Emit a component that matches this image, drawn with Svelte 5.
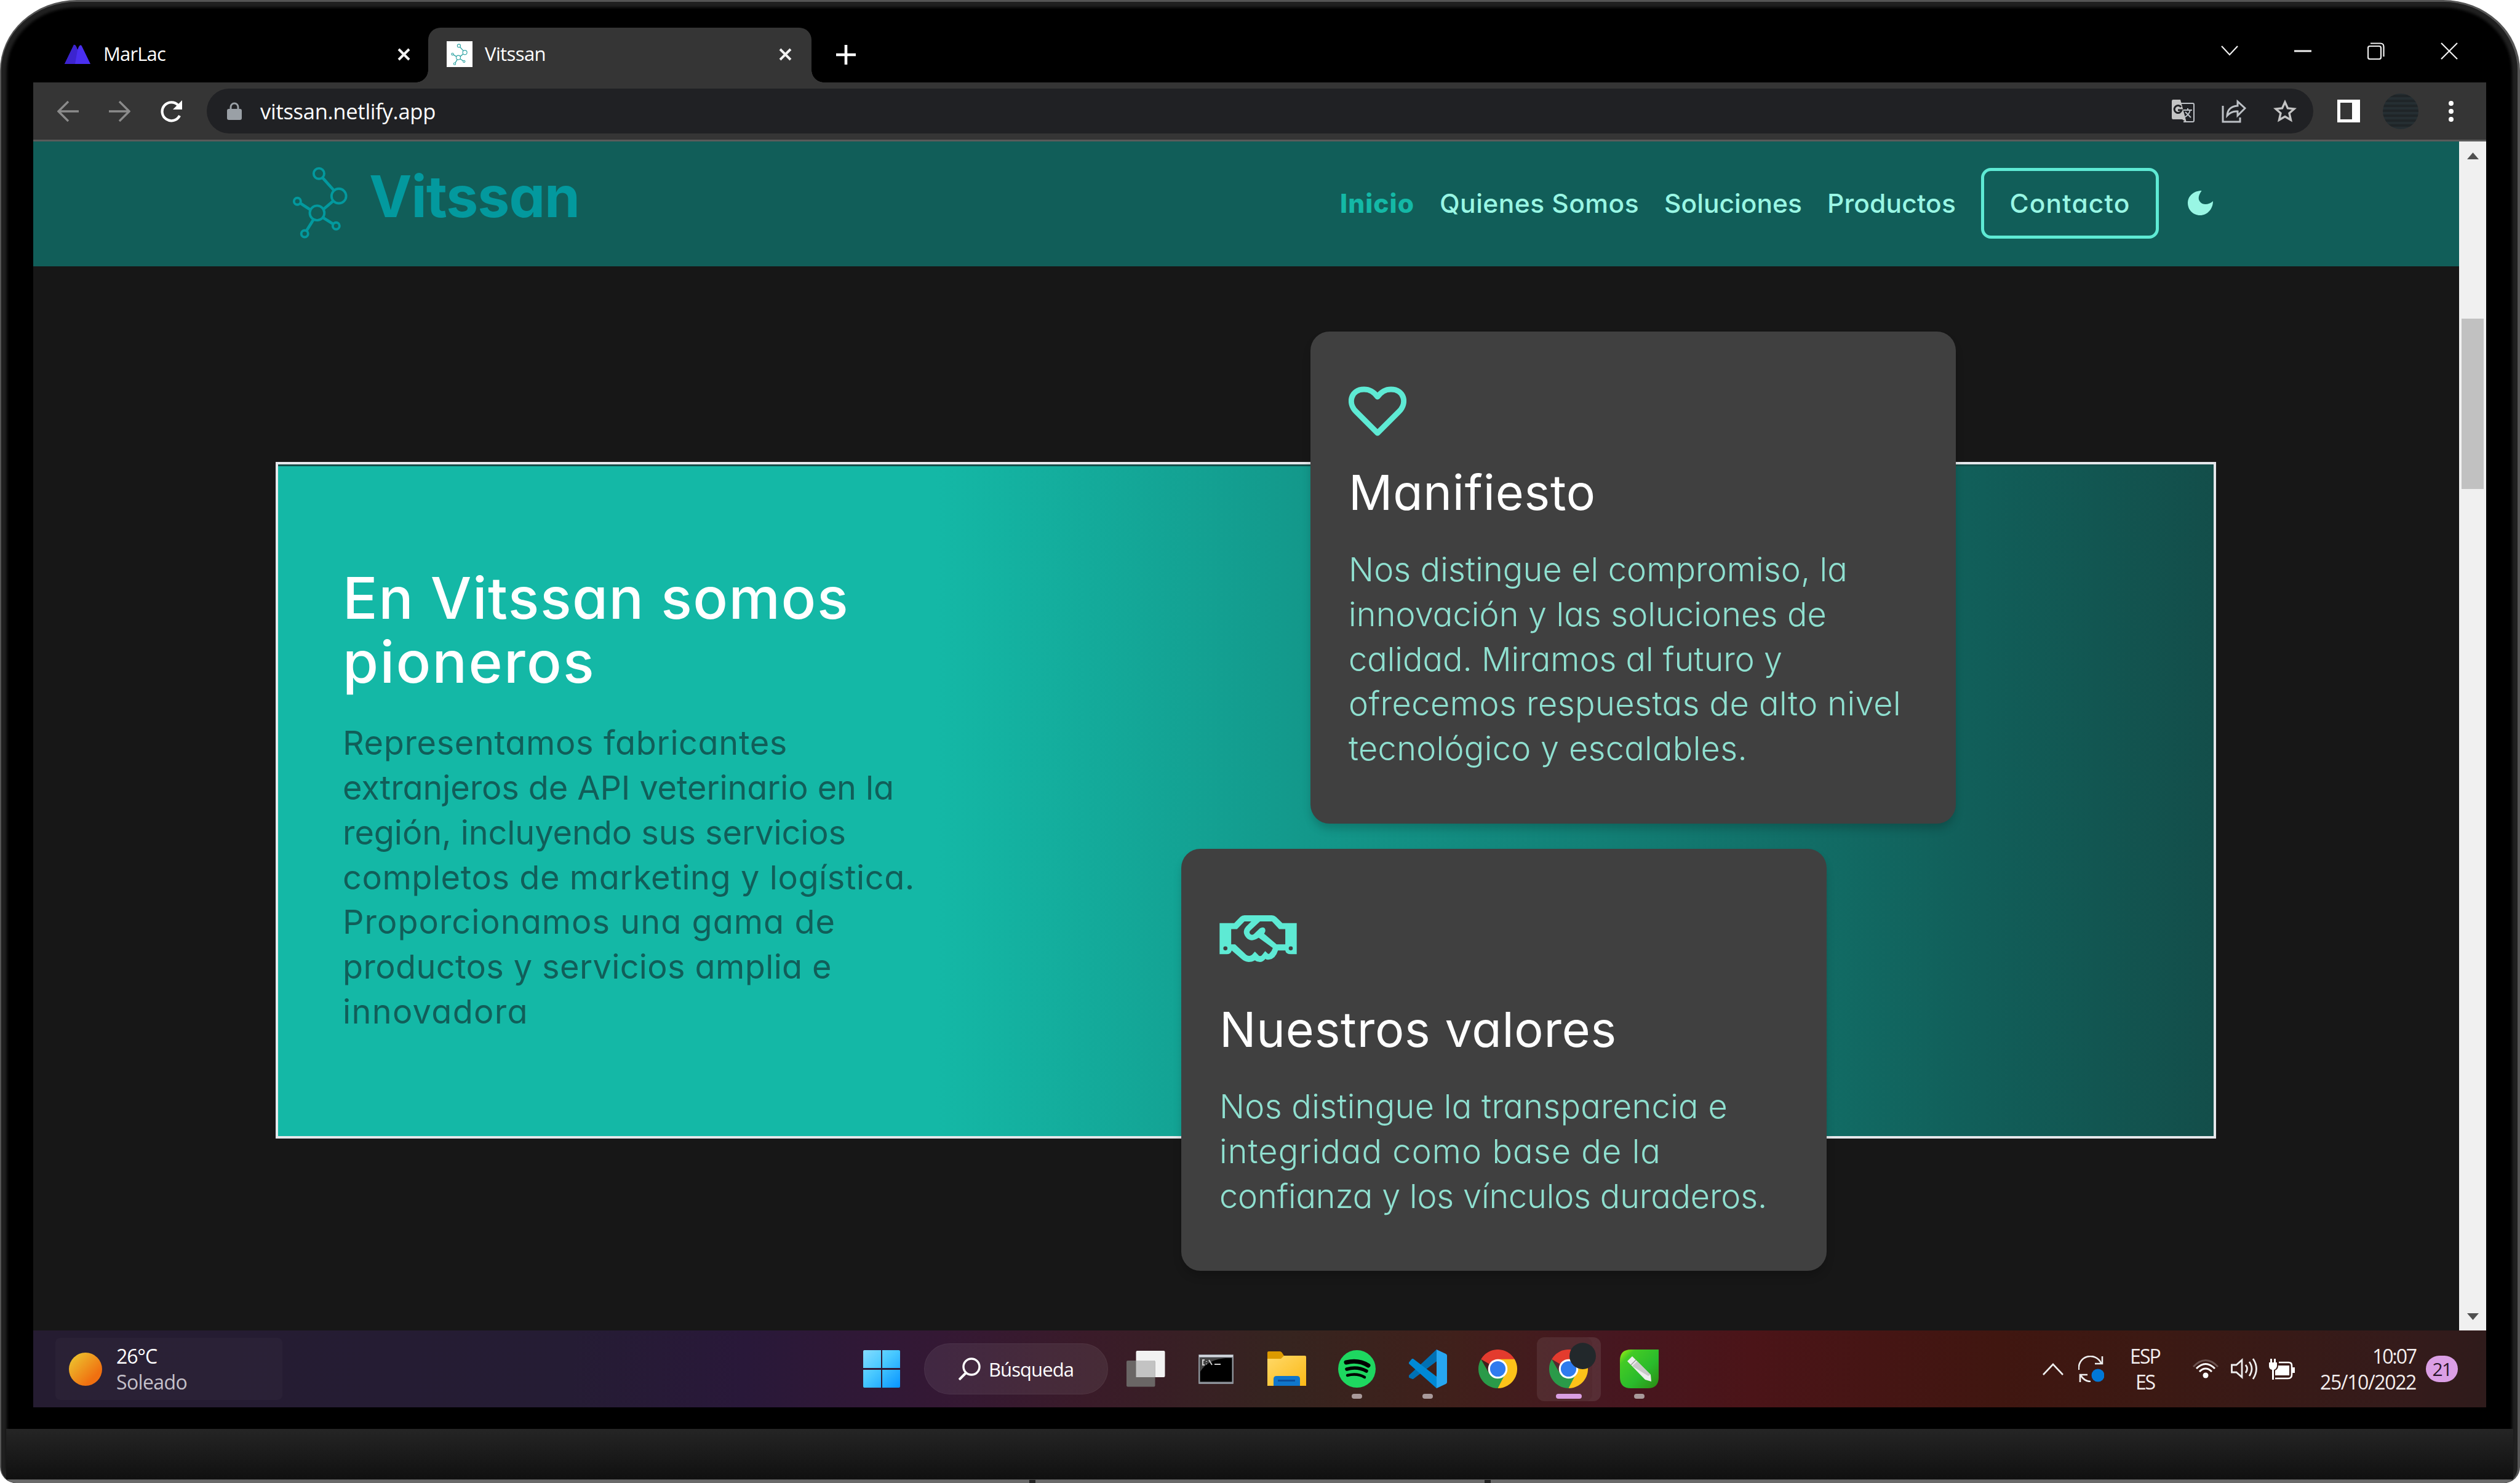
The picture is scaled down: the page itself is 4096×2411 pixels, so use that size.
<script>
  // Tracks a line of text out to an exact width.
  function fit(node, width) {
    const natural = node.getBoundingClientRect().width;
    const count = Math.max(1, node.textContent.length);
    node.style.letterSpacing = (width - natural) / count + 'px';
  }

  const intro = [
    ['Representamos fabricantes', 723],
    ['extranjeros de API veterinario en la', 896],
    ['región, incluyendo sus servicios', 818],
    ['completos de marketing y logística.', 930],
    ['Proporcionamos una gama de', 801],
    ['productos y servicios amplia e', 795],
    ['innovadora', 302]
  ];
  const manifesto = [
    ['Nos distingue el compromiso, la', 811],
    ['innovación y las soluciones de', 777],
    ['calidad. Miramos al futuro y', 705],
    ['ofrecemos respuestas de alto nivel', 898],
    ['tecnológico y escalables.', 648]
  ];
  const values = [
    ['Nos distingue la transparencia e', 826],
    ['integridad como base de la', 718],
    ['confianza y los vínculos duraderos.', 890]
  ];
  const links = [
    ['Quienes Somos', 324],
    ['Soluciones', 224],
    ['Productos', 209]
  ];
</script>

{#snippet molecule()}
  <g fill="none" stroke-width="14" stroke="currentColor">
    <circle cx="197" cy="91" r="31" /><circle cx="314" cy="223" r="43" /><circle cx="186" cy="323" r="43" />
    <circle cx="70" cy="254" r="20" /><circle cx="298" cy="399" r="20" /><circle cx="113" cy="445" r="20" />
    <path d="M218 115 285 190M281 252 222 302M88 266 149 306M219 349 281 388M164 363 124 427" stroke-width="17" />
  </g>
{/snippet}

{#snippet chrome()}
  <path d="M24 24 3.2 12A24 24 0 0 1 44.8 12Z" fill="#e33b2e" />
  <path d="M24 24V12H44.8A24 24 0 0 1 24 48Z" fill="#fcc219" />
  <path d="M24 24 33.5 29.5 24 48A24 24 0 0 1 3.2 12L13.6 30Z" fill="#2a9a49" />
  <circle cx="24" cy="24" r="12" fill="#fff" /><circle cx="24" cy="24" r="9.6" fill="#2f7bee" />
{/snippet}

{#snippet close()}
  <svg class="close" viewBox="0 0 21 21"><path d="M2 2 19 19M19 2 2 19" stroke="#f2f2f2" stroke-width="4" /></svg>
{/snippet}

<div class="device">
  <div class="screen">
    <div class="strip">
      <div class="tab first">
        <svg class="marlac" viewBox="0 0 42 32"><path d="M0 32 15 1Q17 0 19 4L21 9 23 4Q26-1 28 3L42 32Z" fill="#4a2ff0" /><path d="M0 32 15 1Q17 0 19 4L21 9 17 32Z" fill="#3c24cf" /></svg>
        <span class="tabname" use:fit={101}>MarLac</span>
        {@render close()}
      </div>
      <div class="tab active">
        <svg class="favicon" viewBox="0 0 420 510" preserveAspectRatio="xMidYMid meet"><g color="#35a6a6">{@render molecule()}</g></svg>
        <span class="tabname" use:fit={99}>Vitssan</span>
        {@render close()}
      </div>
      <svg class="plus" viewBox="0 0 32 32"><path d="M16 0V32M0 16H32" stroke="#fff" stroke-width="4.6" /></svg>
      <div class="window-buttons">
        <svg width="28" height="28" viewBox="0 0 28 28"><path d="M1 6 14 20 27 6" /></svg>
        <svg width="28" height="28" viewBox="0 0 28 28"><path d="M0 14H28" stroke-width="3" /></svg>
        <svg width="28" height="28" viewBox="0 0 28 28"><rect x="1" y="6" width="21" height="21" rx="3" /><path d="M5 1.5H21Q26.5 1.5 26.5 7V23" /></svg>
        <svg width="28" height="28" viewBox="0 0 28 28"><path d="M1 1 27 27M27 1 1 27" /></svg>
      </div>
    </div>

    <div class="toolbar">
      <svg class="arrow" viewBox="0 0 35 34"><path d="M35 17H3M18 1 2 17 18 33" /></svg>
      <svg class="arrow next" viewBox="0 0 35 34"><path d="M0 17H32M17 1 33 17 17 33" /></svg>
      <svg class="reload" viewBox="0 0 37 36"><path d="M32 25A15 15 0 1 1 29.500 8" fill="none" stroke="#fff" stroke-width="4.200" /><path d="M36 0V15H21Z" fill="#fff" /></svg>
      <div class="omnibox">
        <svg class="lock" viewBox="0 0 24 30"><path d="M6 13V8a6 6 0 0 1 12 0V13" fill="none" stroke="#9aa0a6" stroke-width="3" /><rect y="11" width="24" height="18" rx="3" fill="#9aa0a6" /></svg>
        <span class="url" use:fit={285}>vitssan.netlify.app</span>
        <div class="omni-icons">
          <svg width="37" height="38" viewBox="0 0 37 38">
            <path d="M15 6H34Q36 6 36 8V34Q36 36 34 36H19" fill="none" stroke="#bdc1c6" stroke-width="2" />
            <path d="M2 0H14L24 37 17 32H2Q0 32 0 29V3Q0 0 2 0Z" fill="#c4c4c4" />
            <path d="M15 12A6 6 0 1 0 16 17H10" fill="none" stroke="#202124" stroke-width="3" />
            <path d="M19 17H33M26 14V17M30 17Q28 25 20 29M22 20 31 29" fill="none" stroke="#bdc1c6" stroke-width="2" />
          </svg>
          <svg width="40" height="38" viewBox="0 0 40 38"><path d="M2 10V36H30V29M9 26Q10 11 26 10V3L38 14 26 26V19Q16 18 9 26Z" fill="none" stroke="#bdc1c6" stroke-width="3" /></svg>
          <svg width="38" height="37" viewBox="0 0 38 37"><path d="M19 4 23.500 14 34 15 26 22 28.500 33 19 27.500 9.500 33 12 22 4 15 14.500 14Z" fill="none" stroke="#c4c4c4" stroke-width="3.400" /></svg>
        </div>
      </div>
      <svg class="panel" viewBox="0 0 37 37"><path d="M0 0H37V37H0ZM5 5V32H24V5Z" fill="#fff" fill-rule="evenodd" /></svg>
      <div class="avatar"></div>
      <svg class="dots" viewBox="0 0 8 34"><g fill="#fff"><circle cx="4" cy="4" r="4" /><circle cx="4" cy="17" r="4" /><circle cx="4" cy="30" r="4" /></g></svg>
    </div>

    <div class="view">
      <div class="page">
        <header>
          <div class="brand">
            <svg class="mark" viewBox="0 0 420 510">{@render molecule()}</svg>
            <span class="word" use:fit={342}>Vitssan</span>
          </div>
          <nav>
            <a class="current" use:fit={121}>Inicio</a>
            {#each links as [label, width]}<a use:fit={width}>{label}</a>{/each}
            <button><span use:fit={196}>Contacto</span></button>
            <svg class="moon" viewBox="0 0 40 39"><path d="M22 0C17 7 16 13 19 17C23 23 33 23 40 16.500C40 29 31 39 19.500 39C8 39 0 30 0 19.500C0 9 9 0 22 0Z" fill="#99f6e4" /></svg>
          </nav>
        </header>

        <section class="hero">
          <div class="intro">
            <h2><span use:fit={823}>En Vitssan somos</span><span use:fit={411}>pioneros</span></h2>
            <p>{#each intro as [line, width]}<span use:fit={width}>{line}</span>{/each}</p>
          </div>
          <div class="cards">
            <article class="manifesto">
              <svg class="heart" viewBox="0 0 94 82"><path d="M47 76 12 41C-2 27 4 5 25 5C35 5 41 9 47 17C53 9 59 5 69 5C90 5 96 27 82 41Z" fill="none" stroke="#5eead4" stroke-width="9" stroke-linejoin="round" /></svg>
              <h3><span use:fit={402}>Manifiesto</span></h3>
              <p>{#each manifesto as [line, width]}<span use:fit={width}>{line}</span>{/each}</p>
            </article>
            <article class="values">
              <svg class="shake" viewBox="44 80 452 274">
                <path d="M44 126H130L165 90Q175 80 190 80H350Q365 80 375 90L412 126H496V308H462Q432 308 429 286H386Q372 334 334 340Q318 342 313 335Q298 354 280 354Q262 354 251 344Q235 354 215 354Q190 352 175 338L115 286Q110 308 86 308H44Z" fill="#5eead4" />
                <path d="M112 161H146L190 116H230L200 146Q176 174 193 201Q222 246 273 212L356 272Q350 292 336 304Q330 308 326 304L311 290 297 308Q282 330 266 308L251 293 234 312Q216 324 200 312L135 250H112ZM281 116H351L393 161H429V250H378L305 188Q318 170 308 156Q296 146 280 157L244 191Q230 199 222 187Q215 177 225 168Z" fill="#404040" />
                <circle cx="78" cy="274" r="12" fill="#404040" /><circle cx="461" cy="274" r="12" fill="#404040" />
              </svg>
              <h3><span use:fit={646}>Nuestros valores</span></h3>
              <p>{#each values as [line, width]}<span use:fit={width}>{line}</span>{/each}</p>
            </article>
          </div>
        </section>
      </div>
      <div class="scrollbar">
        <svg viewBox="0 0 19 11"><path d="M0 11 9.500 0 19 11Z" fill="#505050" /></svg>
        <div class="thumb"></div>
        <svg class="down" viewBox="0 0 19 11"><path d="M0 0 9.500 11 19 0Z" fill="#505050" /></svg>
      </div>
    </div>

    <footer>
      <div class="weather">
        <div class="sun"></div>
        <div class="two"><span use:fit={66}>26°C</span><span class="dim" use:fit={115}>Soleado</span></div>
      </div>
      <div class="apps">
        <svg class="windows" viewBox="0 0 60 61">
          <defs><linearGradient id="win" gradientUnits="userSpaceOnUse" x1="0" y1="0" x2="60" y2="61"><stop stop-color="#84dcff" /><stop offset=".45" stop-color="#48c8ff" /><stop offset="1" stop-color="#0794ff" /></linearGradient></defs>
          <path d="M2 0H29V29H0V2Q0 0 2 0ZM31 0H58Q60 0 60 2V29H31ZM0 32H29V61H2Q0 61 0 59ZM31 32H60V59Q60 61 58 61H31Z" fill="url(#win)" />
        </svg>
        <div class="search">
          <svg viewBox="0 0 36 37"><circle cx="21" cy="15" r="13" fill="none" stroke="#fff" stroke-width="3.400" /><path d="M12 25 1 36" stroke="#fff" stroke-width="4" /></svg>
          <span use:fit={138}>Búsqueda</span>
        </div>
        <div class="slot">
          <svg width="63" height="59" viewBox="0 0 63 59"><rect x="15.500" width="47" height="43" rx="2" fill="#f2f2f2" /><rect y="16" width="46.500" height="42.500" rx="2" fill="#6a6665" /><path d="M15.500 16H44.500Q46.500 16 46.500 18V43H15.500Z" fill="#c3c3c3" /></svg>
        </div>
        <div class="slot">
          <svg width="57" height="48" viewBox="0 0 57 48"><rect width="57" height="48" rx="1" fill="#8d9299" /><path d="M1 1H56V4H1Z" fill="#d3d7de" /><path d="M2.500 5.500H54.500V44.500H2.500Z" fill="#000" /><path d="M2.500 5.500H48Q14 8 3 28Z" fill="#444" /><path d="M10 9H7V17H10M13 11V12M13 15V16M17 9 22 17M26 16H36" fill="none" stroke="#ccc" stroke-width="2" /></svg>
        </div>
        <div class="slot">
          <svg width="63" height="57" viewBox="0 0 63 57">
            <defs><linearGradient id="fold" x1="0" y1="0" x2="1" y2="1"><stop stop-color="#ffd968" /><stop offset="1" stop-color="#fbb917" /></linearGradient></defs>
            <path d="M0 14V2Q0 0 2 0H20Q23 0 25 4L27 7H60V14Z" fill="#dc9a00" /><path d="M0 12H22L27 7H61Q63 7 63 9V56H0Z" fill="url(#fold)" /><path d="M10 56V45Q10 40 15 40H48Q53 40 53 45V56Z" fill="#0f76cb" /><path d="M17 47.500H45" stroke="#0a4f9c" stroke-width="3" />
          </svg>
        </div>
        <div class="slot dot">
          <svg width="61" height="61" viewBox="0 0 61 61"><circle cx="30.500" cy="30.500" r="30.500" fill="#1ed760" /><g fill="none" stroke="#000" stroke-linecap="round"><path d="M13 20Q33 15 49 25" stroke-width="7" /><path d="M14 31Q31 26 46 34" stroke-width="5.500" /><path d="M15 41Q31 37 43 44" stroke-width="4.500" /></g></svg>
        </div>
        <div class="slot dot">
          <svg width="63" height="63" viewBox="0 0 63 63"><path d="M46 0 5 41Q-1 45 2 46L7 48 46 19Z" fill="#0077b9" /><path d="M1 42 46 0V19L8 48Q4 47 1 45Z" fill="#0070b4" /><path d="M1 21 6 15 8 15 46 44V63L1 23Z" fill="#0089d6" /><path d="M46 0 61 7Q63 8 63 10V53Q63 55 61 56L46 63Z" fill="#27a7f2" /></svg>
        </div>
        <div class="slot"><svg width="63" height="63" viewBox="0 0 48 48">{@render chrome()}</svg></div>
        <div class="slot running">
          <svg width="63" height="63" viewBox="0 0 48 48">{@render chrome()}</svg>
          <i class="profile"></i>
        </div>
        <div class="slot dot">
          <svg width="63" height="63" viewBox="0 0 63 63">
            <defs><linearGradient id="cdr" x1="0" y1="0" x2="1" y2="1"><stop stop-color="#a6f312" /><stop offset=".2" stop-color="#43cb25" /><stop offset=".6" stop-color="#2abb2c" /><stop offset="1" stop-color="#2d8a12" /></linearGradient></defs>
            <path d="M18 0H63V45Q63 63 45 63H18Q0 63 0 45V18Q0 0 18 0Z" fill="url(#cdr)" /><path d="M12 19 20 11 50 41 51 52 41 49Z" fill="#eee" /><path d="M20 27 28 19 50 41 46 43Z" fill="#c9c9c9" /><path d="M18 25 26 17" stroke="#999" stroke-width="1.500" />
          </svg>
        </div>
      </div>
      <div class="tray">
        <svg class="up" viewBox="0 0 34 20"><path d="M1 19 17 2 33 19" fill="none" stroke="#eee" stroke-width="2.600" /></svg>
        <svg class="sync" viewBox="0 0 42 43"><path d="M1 23A19 19 0 0 1 37 12M39 1V13H27M3 43V31H15M4 32Q10 42 20 42" fill="none" stroke="#eee" stroke-width="2.600" /><circle cx="32" cy="32" r="10.500" fill="#0078d7" /></svg>
        <div class="two lang"><span use:fit={49}>ESP</span><span use:fit={31}>ES</span></div>
        <svg class="wifi" viewBox="0 0 42 31"><g fill="none" stroke="#fff" stroke-width="3"><path d="M1 12Q21-9 41 12" opacity=".25" /><path d="M6 15Q21 0 36 15M11 20Q21 10 31 20" /></g><circle cx="21" cy="26" r="4.500" fill="#fff" /></svg>
        <svg class="volume" viewBox="0 0 44 37"><path d="M1.500 12V24H9L18 32V4L9 12ZM24 12Q29 18 24 25M30 7Q38 18 30 30M36 2Q47 18 36 35" fill="none" stroke="#eee" stroke-width="2.800" /></svg>
        <svg class="battery" viewBox="0 0 42 34"><path d="M16 6H32Q37 6 37 11V26Q37 32 31 32H10" fill="none" stroke="#fff" stroke-width="2.600" /><path d="M15 11H33V27H10V19Q15 17 15 11ZM38 14H42V23H38ZM0 6H13V12Q12 17 8 18V34H5V18Q0 17 0 12ZM2 0H5V7H2ZM8 0H11V7H8Z" fill="#fff" /></svg>
        <div class="two clock"><span use:fit={71}>10:07</span><span use:fit={156}>25/10/2022</span></div>
        <div class="badge"><span use:fit={31}>21</span></div>
      </div>
    </footer>
  </div>
  <div class="base"><i></i></div>
</div>

<style>
  :global(body) { margin: 0; background: #fff; }
  * { box-sizing: border-box; }
  svg { display: block; flex: none; }
  span { white-space: nowrap; width: max-content; }
  .device {
    width: 4096px; height: 2411px; background: #000; overflow: hidden;
    border-radius: 125px 125px 26px 26px / 115px 115px 26px 26px;
    border: solid #555; border-width: 3px 4px 0 2px;
    box-shadow: inset 0 0 4px 9px #202020;
    padding: 0 51px 0 52px;
    display: flex; flex-direction: column;
    font-family: "Open Sans", "Noto Sans", sans-serif; color: #fff;
  }
  .screen { display: flex; flex-direction: column; width: 3987px; height: 2285px; flex: none; }

  .strip { display: flex; height: 131px; padding-top: 42px; align-items: flex-start; flex: none; }
  .tab { height: 89px; display: flex; align-items: center; }
  .first { width: 642px; padding: 0 29px 3px 51px; }
  .active { width: 623px; background: #353535; border-radius: 20px 20px 0 0; padding: 0 32px 3px 30px; position: relative; }
  .active::before, .active::after { content: ""; position: absolute; bottom: 0; width: 20px; height: 20px; }
  .active::before { left: -20px; background: radial-gradient(circle at 0 0, transparent 19.500px, #353535 20px); }
  .active::after { right: -20px; background: radial-gradient(circle at 100% 0, transparent 19.500px, #353535 20px); }
  .marlac { width: 42px; height: 32px; margin-right: 21px; }
  .favicon { width: 42px; height: 42px; background: #fff; margin-right: 20px; }
  .tabname { font-size: 31px; margin-top: -2px; }
  .close { width: 21px; height: 21px; margin-left: auto; }
  .plus { width: 32px; height: 32px; margin: 28px 0 0 40px; }
  .window-buttons { margin: 24px 46px 0 auto; display: flex; gap: 91px; }
  .window-buttons svg { fill: none; stroke: #f0f0f0; stroke-width: 2.200; }

  .toolbar { height: 96px; background: #353535; border-bottom: 3px solid #5a5a5a; display: flex; align-items: center; padding: 0 53px 0 39px; flex: none; }
  .arrow { width: 35px; height: 34px; fill: none; stroke: #8b8b8b; stroke-width: 3.400; }
  .next { margin-left: 49px; }
  .reload { width: 37px; height: 36px; margin-left: 48px; }
  .omnibox { margin-left: 39px; width: 3425px; height: 73px; border-radius: 37px; background: #202124; display: flex; align-items: center; padding: 0 27px 0 33px; }
  .lock { width: 24px; height: 30px; margin-right: 30px; }
  .url { font-size: 34.500px; }
  .omni-icons { margin-left: auto; display: flex; gap: 44px; }
  .panel { width: 37px; height: 37px; margin-left: 39px; }
  .avatar { width: 58px; height: 58px; border-radius: 50%; margin-left: 37px; background: repeating-linear-gradient(0deg, #252e32 0 4px, #1f2528 4px 8px); }
  .dots { width: 8px; height: 34px; margin-left: 49px; }

  .view { display: flex; height: 1933px; flex: none; }
  .page { width: 3943px; background: #171717; font-family: Inter, "Open Sans", sans-serif; font-feature-settings: "cv11"; }
  header { height: 203px; background: #115e59; display: flex; justify-content: space-between; padding: 0 400px 0 410px; }
  .brand { display: flex; color: #03999e; }
  .mark { width: 116px; height: 141px; margin-top: 27px; }
  .word { font-weight: 720; font-size: 93px; line-height: 120px; margin: 29px 0 0 20px; }
  nav { display: flex; align-items: center; color: #99f6e4; font-size: 42.500px; font-weight: 450; padding-bottom: 2px; }
  nav a { margin-right: 41px; white-space: nowrap; }
  .current { color: #14b8a6; font-weight: 850; }
  button { width: 289px; height: 115px; border: 5px solid #5eead4; border-radius: 16px; background: none; color: inherit; font: inherit; font-feature-settings: inherit; padding: 0; }
  .moon { width: 41px; height: 40px; margin: 0 0 2px 47px; }

  .hero {
    margin: 318px 0 0 394px; width: 3154px; height: 1100px;
    border: 4px solid #e5e7eb; display: flex;
    background: linear-gradient(90deg, #14b8a6 34%, #115e59 88%, #134e4a);
    box-shadow: inset 0 3px #134e4a;
  }
  .intro { width: 1468px; padding: 166px 0 0 105px; }
  h2, h3, p { margin: 0; }
  h2 span, h3 span, p span { display: block; }
  h2 { font-size: 94px; line-height: 103.700px; font-weight: 550; }
  .intro p { margin-top: 44px; color: #115e59; font-weight: 370; }
  p { font-size: 54px; line-height: 72.720px; font-weight: 290; }
  .cards { margin-top: -216px; display: flex; flex-direction: column; gap: 41px; height: 1527px; }
  article { width: 1049px; border-radius: 31px; background: #404040; box-shadow: 0 10px 15px -2px #0003; padding-left: 62px; }
  .manifesto { height: 800px; margin-left: 210px; padding-top: 89px; }
  .values { height: 686px; padding-top: 108px; }
  h3 { font-size: 79px; line-height: 93.300px; font-weight: 440; }
  article p { color: #8fe0d0; margin-top: 43px; }
  .heart { width: 94px; height: 82px; margin-bottom: 44px; }
  .shake { width: 126px; height: 76px; margin-bottom: 63px; }

  .scrollbar { width: 44px; background: #f0f0f0; display: flex; flex-direction: column; align-items: center; padding: 18px 0 17px; }
  .scrollbar svg { width: 19px; height: 11px; }
  .thumb { width: 36px; height: 277px; background: #c1c1c1; margin-top: 259px; }
  .down { margin-top: auto; }

  footer {
    height: 125px; display: flex; align-items: center; flex: none;
    background: linear-gradient(93deg, #251c31 0, #251c34 22%, #291839 29%, #341834 37%, #3a1b29 43%, #36241f 51%, #40201b 58%, #461720 64%, #4b1418 70%, #401610 80%, #3c1913 86%, #341b1b 97%, #2f1b1b);
    font-size: 32px;
  }
  .weather { margin-left: 36px; width: 369px; height: 101px; border-radius: 8px; background: #ffffff06; display: flex; align-items: center; padding-left: 22px; }
  .sun { width: 54px; height: 54px; border-radius: 50%; background: linear-gradient(135deg, #edc22e 10%, #f07010 75%); margin-right: 23px; }
  .two { display: flex; flex-direction: column; line-height: 41.500px; }
  .two span { display: block; }
  .dim { color: #c4c0c9; }
  .apps { display: flex; align-items: center; margin-left: 944px; }
  .windows { width: 60px; height: 61px; margin-right: 39px; }
  .search { width: 299px; height: 83px; border-radius: 42px; background: #ffffff12; border: 1px solid #ffffff0c; display: flex; align-items: center; padding-left: 55px; margin-right: 9px; font-size: 31px; }
  .search svg { width: 36px; height: 37px; margin-right: 13px; }
  .slot { width: 104px; height: 104px; margin-right: 10.600px; display: flex; align-items: center; justify-content: center; position: relative; }
  .dot::after, .running::after { content: ""; position: absolute; bottom: 4px; width: 17px; height: 8px; border-radius: 4px; background: #a99a9b; }
  .running { background: #ffffff14; border-radius: 12px; box-shadow: inset -14px 0 #ffffff05; }
  .running::after { width: 42px; background: #d99ee2; }
  .profile { position: absolute; left: 53px; top: 9px; width: 43px; height: 43px; border-radius: 50%; background: #22282b; }
  .tray { display: flex; align-items: center; margin-left: auto; padding-right: 46px; color: #f3eeee; }
  .up { width: 34px; height: 20px; margin-right: 24px; }
  .sync { width: 42px; height: 43px; margin-right: 42px; }
  .lang { align-items: center; }
  .wifi { width: 42px; height: 31px; margin: 0 20px 0 53px; }
  .volume { width: 44px; height: 37px; margin-right: 18px; }
  .battery { width: 42px; height: 34px; margin-right: 41px; }
  .clock { align-items: flex-end; margin-right: 16px; }
  .badge { width: 52px; height: 43px; border-radius: 22px; background: #db9fe5; color: #281528; display: flex; align-items: center; justify-content: center; font-size: 30px; }

  .base { margin: 35px -44px 0; height: 88px; flex: none; background: linear-gradient(#252525, #101010 93%, #6a6a6a 94%); display: flex; justify-content: center; align-items: flex-end; }
  .base i { width: 750px; height: 5px; border: solid #222; border-width: 0 10px; }
</style>
